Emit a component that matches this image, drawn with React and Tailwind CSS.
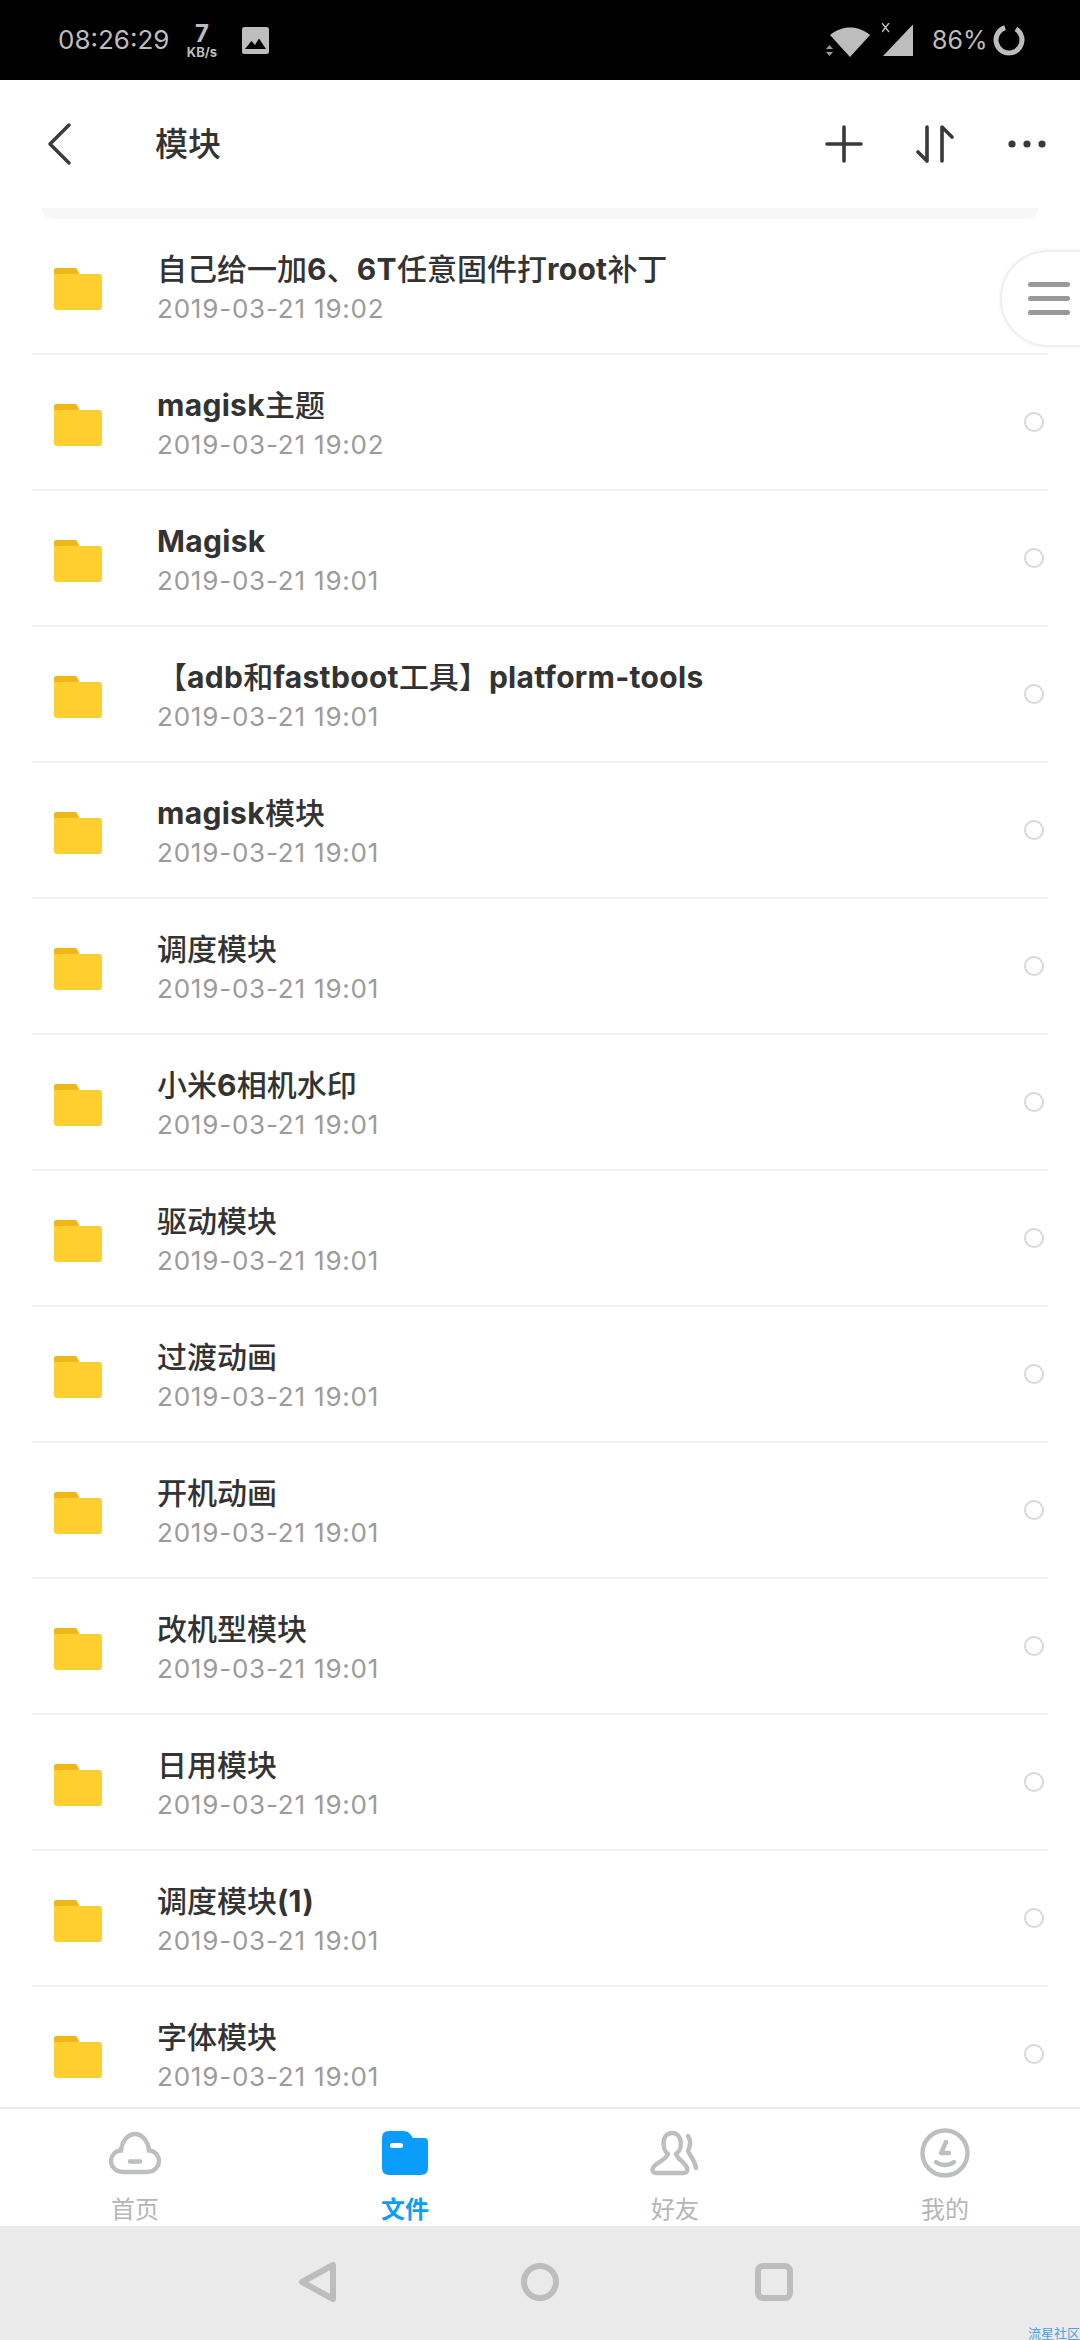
const folders = [
  ['自己给一加6、6T任意固件打root补丁', '2019-03-21 19:02'],
  ['magisk主题', '2019-03-21 19:02'],
  ['Magisk', '2019-03-21 19:01'],
  ['【adb和fastboot工具】platform-tools', '2019-03-21 19:01'],
  ['magisk模块', '2019-03-21 19:01'],
  ['调度模块', '2019-03-21 19:01'],
  ['小米6相机水印', '2019-03-21 19:01'],
  ['驱动模块', '2019-03-21 19:01'],
  ['过渡动画', '2019-03-21 19:01'],
  ['开机动画', '2019-03-21 19:01'],
  ['改机型模块', '2019-03-21 19:01'],
  ['日用模块', '2019-03-21 19:01'],
  ['调度模块(1)', '2019-03-21 19:01'],
  ['字体模块', '2019-03-21 19:01'],
]

// latin runs are heavier than the chinese ones in the titles
function titleParts(name) {
  return name.split(/([\x00-\x7f]+)/).map((part, i) =>
    i % 2 === 1 ? <span key={i} className="font-bold tracking-[0.3px]">{part}</span> : part
  )
}

function StatusBar() {
  return (
    <div className="flex h-[80px] shrink-0 items-center bg-black pl-[58px] pr-[55px] text-[#bdbdbd]">
      <span className="w-[110px] text-[26px] leading-none">08:26:29</span>
      <div className="ml-[16px] flex w-[36px] flex-col items-center">
        <span className="text-[24px] font-bold leading-[24px]">7</span>
        <span className="text-[13px] font-bold leading-[13px]">KB/s</span>
      </div>
      <svg width="27" height="27" viewBox="0 0 27 27" className="ml-[22px]">
        <rect width="27" height="27" rx="2.5" fill="#bdbdbd" />
        <path d="M3 22 L9.5 14 L13 18 L17 11.5 L24 22 Z" fill="#000" />
      </svg>
      <div className="flex-1" />
      <svg width="46" height="34" viewBox="0 0 46 34" className="mt-[1px]">
        <path d="M4 11 C16 1 32 1 44 11 L24 33 Z" fill="#bdbdbd" />
        <path d="M0 25 L3.5 21 L7 25 Z M0 28 L7 28 L3.5 32 Z" fill="#9a9a9a" />
      </svg>
      <svg width="32" height="34" viewBox="0 0 32 34" className="ml-[10px] mt-[-1px]">
        <path d="M31 1.5 V33 H1 Z" fill="#bdbdbd" />
        <path d="M0 0 L7 9 M7 0 L0 9" stroke="#bdbdbd" strokeWidth="1.4" />
      </svg>
      <span className="ml-[18px] w-[52px] text-[25px] leading-none">86%</span>
      <svg width="32" height="32" viewBox="0 0 32 32" className="ml-[9px]">
        <circle cx="16" cy="16" r="13" fill="none" stroke="#bdbdbd" strokeWidth="5" strokeDasharray="70 12" transform="rotate(-58 16 16)" />
      </svg>
    </div>
  )
}

function Header() {
  return (
    <div className="flex h-[128px] shrink-0 items-center bg-white pl-[48px] pr-[34px]">
      <svg width="24" height="42" viewBox="0 0 24 42" fill="none" stroke="#3a3a3a" strokeWidth="3.4" strokeLinecap="round" strokeLinejoin="round">
        <path d="M21 2 L2 21 L21 40" />
      </svg>
      <h1 className="ml-[83px] text-[33px] font-medium leading-none text-[#333333]">模块</h1>
      <div className="flex-1" />
      <svg width="38" height="38" viewBox="0 0 38 38" fill="none" stroke="#3a3a3a" strokeWidth="3.6" strokeLinecap="round">
        <path d="M19 2 V36 M2 19 H36" />
      </svg>
      <svg width="38" height="38" viewBox="0 0 38 38" fill="none" stroke="#3a3a3a" strokeWidth="3.6" strokeLinecap="round" strokeLinejoin="round" className="ml-[53px]">
        <path d="M2 27 L11 36 V2" />
        <path d="M26 36 V2 L36 12" />
      </svg>
      <svg width="38" height="10" viewBox="0 0 38 10" fill="#3a3a3a" className="ml-[54px]">
        <circle cx="4" cy="5" r="3.6" />
        <circle cx="19" cy="5" r="3.6" />
        <circle cx="34" cy="5" r="3.6" />
      </svg>
    </div>
  )
}

function FolderRow({ name, date, hideRadio }) {
  return (
    <div className="mx-[32px] flex h-[136px] shrink-0 items-center border-b-2 border-[#f0f0f0] pl-[22px] pr-[4px]">
      <svg width="48" height="42" viewBox="0 0 48 42" className="mt-[5px] shrink-0">
        <path d="M0 3 Q0 0 3 0 H20 Q23 0 24 3 L25 6 H45 Q48 6 48 9 V39 Q48 42 45 42 H3 Q0 42 0 39 Z" fill="#fecf2f" />
        <path d="M0 6 V3 Q0 0 3 0 H20 Q23 0 24 3 L25 6 Z" fill="#eeb81c" />
      </svg>
      <div className="ml-[55px] min-w-0 flex-1">
        <div className="mt-[2px] text-[30px] font-medium leading-[38px] text-[#333333]">{titleParts(name)}</div>
        <div className="mt-[5px] text-[26px] leading-[32px] tracking-[0.8px] text-[#9b9b9b]">{date}</div>
      </div>
      {!hideRadio && <div className="h-[20px] w-[20px] shrink-0 rounded-full border-2 border-[#d8d8d8]" />}
    </div>
  )
}

function TabItem({ label, active, children }) {
  return (
    <div className="flex flex-1 flex-col items-center">
      <div className="flex h-[48px] items-center justify-center">{children}</div>
      <span className={`mt-[20px] text-[24px] leading-[26px] ${active ? 'font-bold text-[#0a9dfc]' : 'text-[#b4b6b8]'}`}>{label}</span>
    </div>
  )
}

function TabBar() {
  return (
    <div className="flex h-[119px] shrink-0 border-t-2 border-[#ececec] bg-white pt-[20px]">
      <TabItem label="首页">
        <svg width="52" height="44" viewBox="0 0 52 44" fill="none" stroke="#bcbec0" strokeWidth="4.4" strokeLinecap="round">
          <path d="M14 41 H38 C45 41 50 36 50 30 C50 24 45 19.5 40 19.5 C39 10 33 3 26 3 C19 3 13 10 12 19.5 C7 19.5 2 24 2 30 C2 36 7 41 14 41 Z" />
          <path d="M21 30.5 H31" />
        </svg>
      </TabItem>
      <TabItem label="文件" active>
        <svg width="46" height="44" viewBox="0 0 46 44">
          <path d="M0 7 Q0 0 7 0 H21 Q26 0 28 3 L31 7 H42 Q46 7 46 11 V37 Q46 44 39 44 H7 Q0 44 0 37 Z" fill="#0a9dfc" />
          <rect x="8" y="12" width="13" height="5" rx="2.5" fill="#ffffff" />
        </svg>
      </TabItem>
      <TabItem label="好友">
        <svg width="50" height="46" viewBox="0 0 50 46" fill="none" stroke="#bcbec0" strokeWidth="4.4" strokeLinecap="round" strokeLinejoin="round">
          <path d="M18 24 C12 20 11 3 22 3 C33 3 33 20 26 24 C28 30 35 32 37 38 C38 42 36 43 33 43 H6 C3 43 2 41 3 38 C5 33 15 31 18 24 Z" />
          <path d="M38 6 C42 12 40 17 38 21 C40 26 45 30 46 38" />
        </svg>
      </TabItem>
      <TabItem label="我的">
        <svg width="50" height="50" viewBox="0 0 50 50" fill="none" stroke="#bcbec0" strokeWidth="4.4" strokeLinecap="round" strokeLinejoin="round">
          <circle cx="25" cy="25" r="22.5" />
          <path d="M26 14 L21 25 H29" />
          <path d="M16 34 C21 38 29 38 34 34" />
        </svg>
      </TabItem>
    </div>
  )
}

function NavBar() {
  return (
    <div className="relative flex h-[114px] shrink-0 items-center bg-[#eaeaea] pb-[2px] pl-[299px]">
      <svg width="38" height="40" viewBox="0 0 38 40" fill="none" stroke="#bdbdbd" strokeWidth="6" strokeLinejoin="round">
        <path d="M34 3 V37 L3 20 Z" />
      </svg>
      <svg width="38" height="38" viewBox="0 0 38 38" fill="none" stroke="#bdbdbd" strokeWidth="6" className="ml-[184px]">
        <circle cx="19" cy="19" r="16" />
      </svg>
      <svg width="38" height="38" viewBox="0 0 38 38" fill="none" stroke="#bdbdbd" strokeWidth="6" className="ml-[196px]">
        <rect x="3" y="3" width="32" height="32" rx="5" />
      </svg>
      <span className="absolute bottom-0 right-0 text-[13px] leading-[13px] text-[#4aa3e0]">流星社区</span>
    </div>
  )
}

export default function App() {
  return (
    <div
      className="flex h-[2340px] w-[1080px] flex-col overflow-hidden bg-white"
      style={{ fontFamily: 'Inter, "Noto Sans CJK SC", sans-serif' }}
    >
      <StatusBar />
      <Header />
      <div className="relative min-h-0 flex-1 overflow-hidden">
        <div className="mx-[42px] h-[11px] rounded-b-[30px] bg-[#f6f6f6]" />
        {folders.map(([name, date], i) => (
          <FolderRow key={name} name={name} date={date} hideRadio={i === 0} />
        ))}
        <div className="absolute right-[-30px] top-[42px] flex h-[97px] w-[110px] flex-col justify-center gap-[9px] rounded-l-full border-2 border-[#efefef] bg-white pl-[26px] shadow-[0_0_4px_rgba(0,0,0,0.06)]">
          <div className="h-[5px] w-[42px] rounded-full bg-[#999999]" />
          <div className="h-[5px] w-[42px] rounded-full bg-[#999999]" />
          <div className="h-[5px] w-[42px] rounded-full bg-[#999999]" />
        </div>
      </div>
      <TabBar />
      <NavBar />
    </div>
  )
}
